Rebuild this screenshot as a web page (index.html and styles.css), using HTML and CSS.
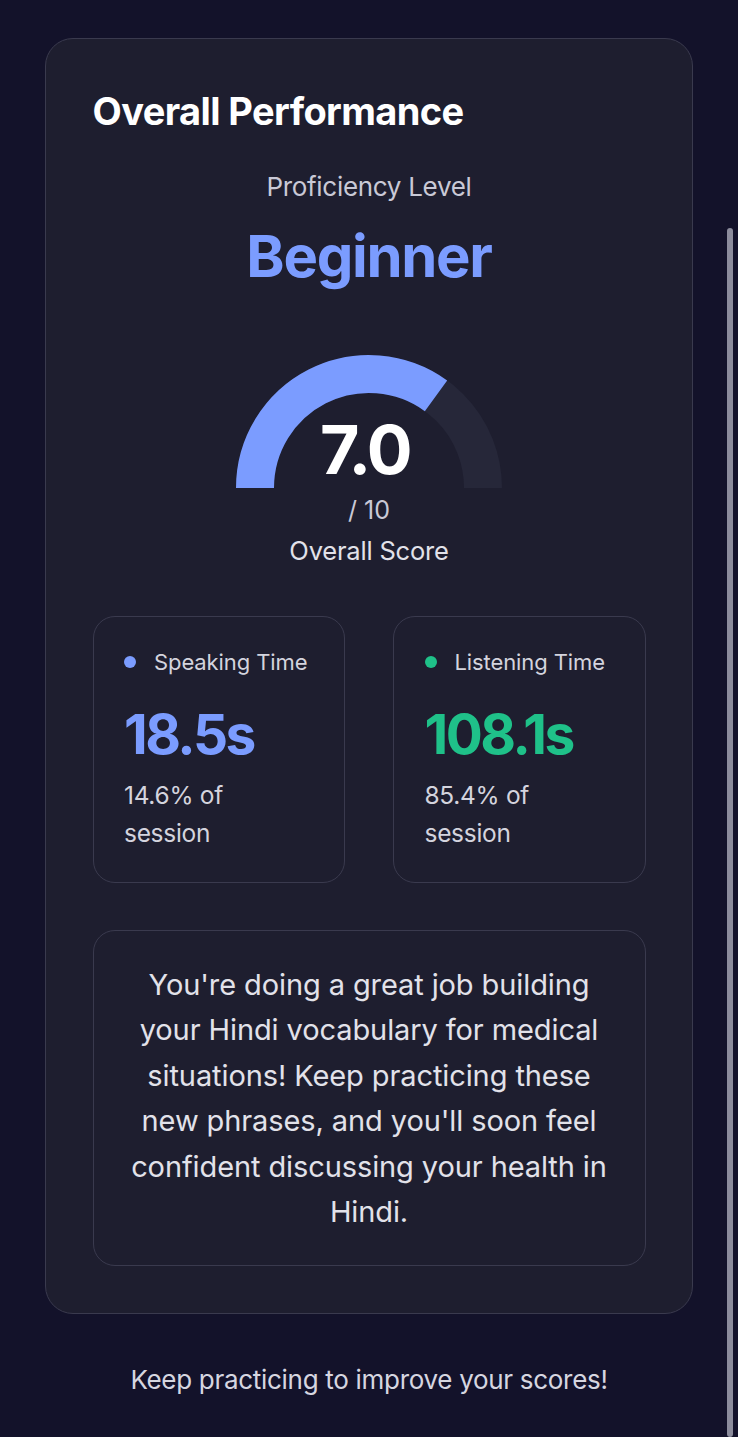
FILE: index.html
```html
<!DOCTYPE html>
<html lang="en">
<head>
<meta charset="utf-8">
<title>Overall Performance</title>
<link rel="stylesheet" href="styles.css">
</head>
<body>
<main class="page">
  <section class="card">
    <h1 class="title">Overall Performance</h1>
    <div class="level-label">Proficiency Level</div>
    <div class="level-value">Beginner</div>
    <div class="gauge">
      <svg class="gauge-svg" width="268" height="134" viewBox="0 0 268 134">
        <path d="M 20 134 A 114 114 0 0 1 248 134" fill="none" stroke="#262739" stroke-width="38"/>
        <path d="M 20 134 A 114 114 0 0 1 201.01 41.77" fill="none" stroke="#7b9cff" stroke-width="38"/>
      </svg>
      <div class="gauge-score">7.0</div>
    </div>
    <div class="gauge-max">/ 10</div>
    <div class="gauge-label">Overall Score</div>

    <div class="stats">
      <div class="stat">
        <div class="stat-head"><span class="dot dot-blue"></span>Speaking Time</div>
        <div class="stat-value blue">18.5s</div>
        <div class="stat-sub">14.6% of<br>session</div>
      </div>
      <div class="stat">
        <div class="stat-head"><span class="dot dot-green"></span>Listening Time</div>
        <div class="stat-value green">108.1s</div>
        <div class="stat-sub">85.4% of<br>session</div>
      </div>
    </div>

    <div class="message">You're doing a great job building<br>your Hindi vocabulary for medical<br>situations! Keep practicing these<br>new phrases, and you'll soon feel<br>confident discussing your health in<br>Hindi.</div>
  </section>
  <p class="footer">Keep practicing to improve your scores!</p>
</main>
<div class="scrollbar"></div>
</body>
</html>
```
FILE: styles.css
```css
html, body {
  margin: 0;
  padding: 0;
  background: #13122a;
}
body {
  font-family: "Inter", "Noto Sans", sans-serif;
  color: #e6e6ee;
  width: 738px;
  height: 1437px;
  overflow: hidden;
}
.page {
  padding: 38px 45px 0 45px;
  display: flex;
  flex-direction: column;
}
.card {
  background: #1e1e2f;
  border: 1.5px solid #3a3a4e;
  border-radius: 28px;
  padding: 48.5px 46.5px 47.5px 46.5px;
  display: flex;
  flex-direction: column;
  align-items: center;
}
.title {
  align-self: flex-start;
  margin: 0;
  font-size: 38px;
  font-weight: 700;
  letter-spacing: -0.6px;
  color: #ffffff;
  line-height: 46px;
}
.level-label {
  margin-top: 37.5px;
  font-size: 26px;
  color: #c9c9d6;
  line-height: 32px;
  letter-spacing: -0.3px;
}
.level-value {
  margin-top: 20.5px;
  font-size: 58px;
  font-weight: 700;
  color: #7b9cff;
  letter-spacing: -1.3px;
  line-height: 64px;
}
.gauge {
  position: relative;
  margin-top: 66px;
  width: 268px;
  height: 134px;
}
.gauge-svg {
  display: block;
}
.gauge-score {
  position: absolute;
  left: 0;
  right: 8px;
  top: 60px;
  text-align: center;
  font-size: 68px;
  font-weight: 700;
  letter-spacing: -2.5px;
  color: #ffffff;
  line-height: 70px;
}
.gauge-max {
  margin-top: 7.5px;
  font-size: 25px;
  color: #c9c9d6;
  line-height: 30px;
}
.gauge-label {
  margin-top: 11px;
  font-size: 25.5px;
  color: #e2e2ea;
  line-height: 30px;
  letter-spacing: -0.2px;
}
.stats {
  align-self: stretch;
  margin-top: 49.5px;
  display: grid;
  grid-template-columns: 1fr 1fr;
  gap: 48px;
}
.stat {
  border: 1.5px solid #3a3a4e;
  border-radius: 22px;
  padding: 31px 20px 24px 30.5px;
  height: 267px;
  box-sizing: border-box;
}
.stat-head {
  display: flex;
  align-items: center;
  gap: 18px;
  font-size: 22px;
  color: #d4d4de;
  line-height: 28px;
  letter-spacing: -0.1px;
  white-space: nowrap;
}
.dot {
  width: 12px;
  height: 12px;
  border-radius: 50%;
  display: inline-block;
  flex: none;
}
.dot-blue { background: #7b9cff; }
.dot-green { background: #1fc189; }
.stat-value {
  margin-top: 27px;
  font-size: 55px;
  font-weight: 700;
  letter-spacing: -2.5px;
  line-height: 62px;
}
.blue { color: #7b9cff; }
.green { color: #1fc189; }
.stat-sub {
  margin-top: 11.5px;
  font-size: 24.5px;
  line-height: 38px;
  color: #d4d4de;
  letter-spacing: -0.3px;
}
.message {
  align-self: stretch;
  margin-top: 47px;
  border: 1.5px solid #3a3a4e;
  border-radius: 22px;
  padding: 31px 10px 30px 10px;
  text-align: center;
  font-size: 29px;
  line-height: 45.5px;
  color: #e2e2ea;
  letter-spacing: -0.1px;
  white-space: nowrap;
}
.footer {
  margin: 48.5px 0 0 0;
  text-align: center;
  font-size: 26px;
  color: #d6d6e0;
  line-height: 34px;
  letter-spacing: -0.3px;
}
.scrollbar {
  position: fixed;
  left: 727px;
  top: 228px;
  width: 6px;
  height: 1209px;
  background: #8c8c9c;
  border-radius: 3px;
}
```
